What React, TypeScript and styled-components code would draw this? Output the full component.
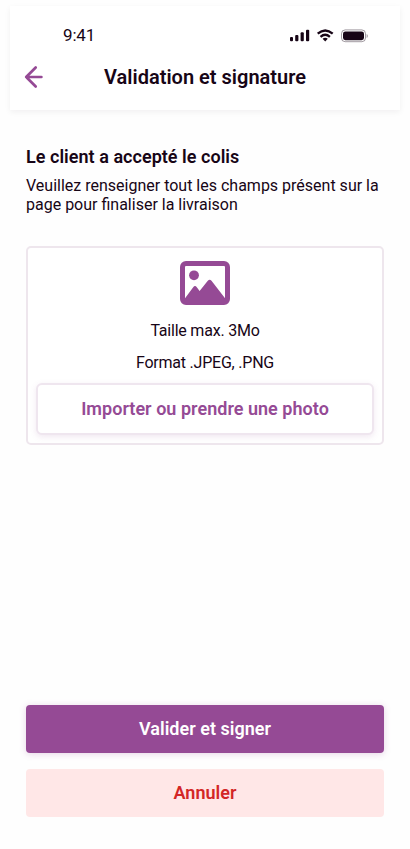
import React from "react";
import styled, { createGlobalStyle, css } from "styled-components";

const GlobalStyle = createGlobalStyle`
  *, *::before, *::after { box-sizing: border-box; }
  html, body { margin: 0; background: #fefefe; }
  body { font-family: Roboto, "Liberation Sans", sans-serif; color: #170516; }
  h1, h2, p { margin: 0; }
`;

const Page = styled.div`
  width: 410px;
  height: 849px;
  padding: 6px 10px 0;
  overflow: hidden;
  display: flex;
  flex-direction: column;
`;

const Header = styled.header`
  height: 104px;
  flex: none;
  background: #fff;
  box-shadow: 0 2px 6px rgba(30, 10, 30, 0.06);
`;

const StatusBar = styled.div`
  display: flex;
  align-items: flex-start;
  justify-content: space-between;
  height: 44px;
  padding: 19px 32px 0 53px;
`;

const Clock = styled.span`
  font-size: 17px;
  line-height: 20px;
  letter-spacing: -0.15px;
`;

const StatusIcons = styled.svg`
  display: block;
  width: 80px;
  height: 16px;
  margin-top: 3px;
`;

const NavBar = styled.div`
  display: grid;
  grid-template-columns: 48px 1fr 48px;
  align-items: center;
  height: 54px;
`;

const BackButton = styled.button`
  display: flex;
  justify-content: center;
  padding: 0 1px 0 0;
  border: 0;
  background: none;
`;

const Title = styled.h1`
  font-size: 20px;
  line-height: 24px;
  font-weight: 600;
  text-align: center;
  white-space: nowrap;
`;

const Content = styled.main`
  flex: 1;
  display: flex;
  flex-direction: column;
  padding: 36px 16px 32px;
`;

const Heading = styled.h2`
  font-size: 18px;
  line-height: 21px;
  font-weight: 600;
  letter-spacing: 0.03px;
`;

const Intro = styled.p`
  margin-top: 9px;
  font-size: 16px;
  line-height: 19px;
`;

const UploadCard = styled.section`
  display: flex;
  flex-direction: column;
  align-items: center;
  height: 199px;
  margin-top: 32px;
  padding: 13px 8px 8px;
  border: 2px solid #eee6ed;
  border-radius: 5px;
  background: #fff;
`;

const Hint = styled.p<{ $gap: number }>`
  margin-top: ${({ $gap }) => $gap}px;
  font-size: 16px;
  line-height: 19px;
  letter-spacing: -0.22px;
`;

type Variant = "outline" | "primary" | "danger";

const variants = {
  outline: css`
    height: 52px;
    margin-top: 11px;
    color: #954a95;
    background: #fff;
    border: 2px solid #efe6ef;
    border-radius: 6px;
    box-shadow: 0 2px 6px rgba(149, 74, 149, 0.13);
  `,
  primary: css`
    height: 48px;
    color: #fff;
    background: #954a95;
    box-shadow: 0 1px 7px rgba(149, 74, 149, 0.24);
  `,
  danger: css`
    height: 48px;
    color: #d32626;
    background: #ffe7e7;
  `,
};

const Button = styled.button<{ $variant: Variant }>`
  width: 100%;
  flex: none;
  padding: 0 0 2px;
  border: 0;
  border-radius: 4px;
  font: 600 18px/21px Roboto, "Liberation Sans", sans-serif;
  letter-spacing: 0.03px;
  ${({ $variant }) => variants[$variant]}
`;

const Actions = styled.footer`
  display: flex;
  flex-direction: column;
  gap: 16px;
  margin-top: auto;
`;

const DeviceStatus = () => (
  <StatusIcons viewBox="0 0 80 16" fill="#170516">
    <rect x="2" y="9" width="3" height="4.3" rx="1" />
    <rect x="7.2" y="7" width="3.2" height="6.3" rx="1" />
    <rect x="12.6" y="4.3" width="3.2" height="9" rx="1" />
    <rect x="18" y="1.7" width="3.2" height="11.6" rx="1" />
    <g fill="none" stroke="#170516" strokeWidth="2.3">
      <path d="M29.7 5.7Q37.2 -0.7 44.7 5.7" />
      <path d="M32.5 8.8Q37.2 4.8 41.9 8.8" />
    </g>
    <path d="M34.6 10.8Q37.2 8.8 39.8 10.8L37.2 13.4Z" />
    <rect x="53.5" y="1.9" width="24" height="11.8" rx="3.7" fill="none" stroke="#170516" strokeOpacity="0.4" />
    <rect x="55" y="3.4" width="21" height="8.8" rx="2.4" />
    <path d="M78.6 6v4q1.3-.6 1.3-2t-1.3-2Z" fillOpacity="0.4" />
  </StatusIcons>
);

const BackArrow = () => (
  <svg width="22" height="24" viewBox="0 0 22 24" fill="none" stroke="#954a95" strokeWidth="2.7" strokeLinecap="round" strokeLinejoin="round">
    <path d="M12.7 2.5 3.2 12l9.5 9.5M3.2 12h15.2" />
  </svg>
);

const PictureIcon = () => (
  <svg width="50" height="44" viewBox="0 0 50 44" fill="#954a95">
    <rect x="2.5" y="2.5" width="45" height="39" rx="3.5" fill="none" stroke="#954a95" strokeWidth="5" />
    <circle cx="14" cy="14.3" r="4.9" />
    <path d="M4.5 38 13.2 26.2Q15 23.8 16.8 26.2L19.6 30 27.8 19.7Q29.7 17.7 31.5 19.7L46 38.5v3H4.5Z" />
  </svg>
);

export default function App() {
  return (
    <>
      <GlobalStyle />
      <Page>
        <Header>
          <StatusBar>
            <Clock>9:41</Clock>
            <DeviceStatus />
          </StatusBar>
          <NavBar>
            <BackButton aria-label="Retour">
              <BackArrow />
            </BackButton>
            <Title>Validation et signature</Title>
          </NavBar>
        </Header>
        <Content>
          <Heading>Le client a accepté le colis</Heading>
          <Intro>Veuillez renseigner tout les champs présent sur la page pour finaliser la livraison</Intro>
          <UploadCard>
            <PictureIcon />
            <Hint $gap={16}>Taille max. 3Mo</Hint>
            <Hint $gap={13}>Format .JPEG, .PNG</Hint>
            <Button $variant="outline">Importer ou prendre une photo</Button>
          </UploadCard>
          <Actions>
            <Button $variant="primary">Valider et signer</Button>
            <Button $variant="danger">Annuler</Button>
          </Actions>
        </Content>
      </Page>
    </>
  );
}
